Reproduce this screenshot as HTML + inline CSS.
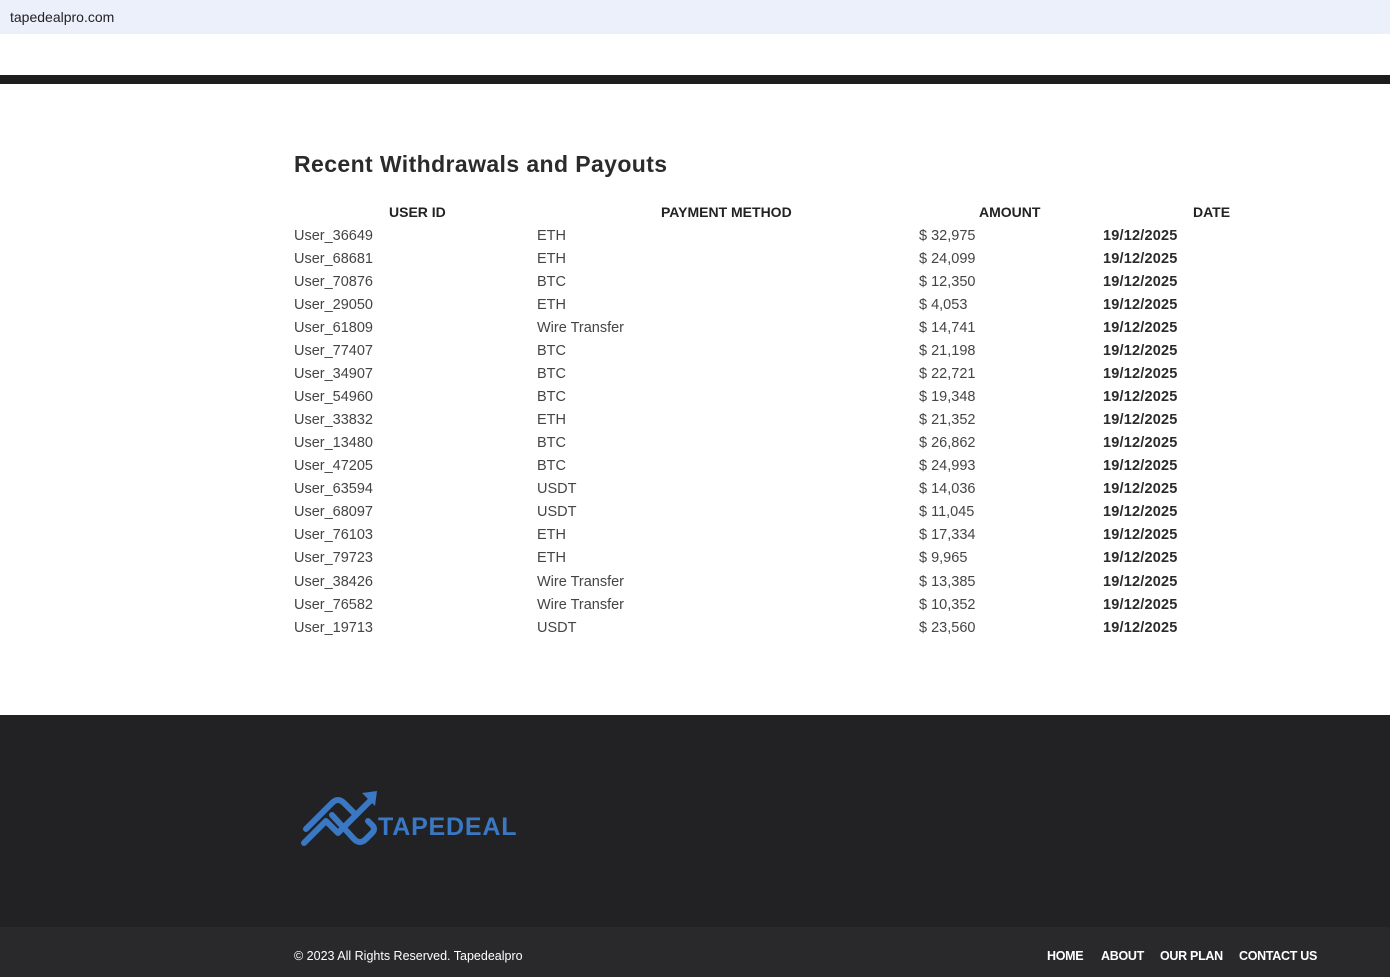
<!DOCTYPE html>
<html><head><meta charset="utf-8"><style>
*{margin:0;padding:0;box-sizing:border-box}
body{width:1390px;height:977px;overflow:hidden;background:#fff;font-family:"Liberation Sans",sans-serif;position:relative;color:#3a3a3a}
.top{position:absolute;left:0;top:0;width:1390px;height:34px;background:#ecf0fa;font-size:14px;color:#222;padding:9px 10px}
.bar{position:absolute;left:0;top:75px;width:1390px;height:9px;background:#1d1d20}
h2{position:absolute;left:294px;top:151px;font-size:23px;font-weight:bold;color:#2b2b2b;letter-spacing:0.4px}
.th{position:absolute;top:204px;font-size:14px;font-weight:bold;color:#222}
.row{position:absolute;left:0;width:1390px;height:23px;font-size:14.5px;color:#444}
.row span{position:absolute;top:0}
.row b{position:absolute;left:1103px;top:0;color:#2a2a2a;font-size:14.5px;letter-spacing:0.2px}
.foot{position:absolute;left:0;top:715px;width:1390px;height:212px;background:#222224}
.bot{position:absolute;left:0;top:927px;width:1390px;height:50px;background:#29292b;color:#fff;font-size:12.5px}
.bot .c{position:absolute;left:294px;top:22px}
.bot .n{position:absolute;top:22px;font-weight:bold;font-size:12.5px;letter-spacing:-0.3px}
</style></head><body>
<div class="top">tapedealpro.com</div>
<div class="bar"></div>
<h2>Recent Withdrawals and Payouts</h2>
<div class="th" style="left:389px">USER ID</div>
<div class="th" style="left:661px">PAYMENT METHOD</div>
<div class="th" style="left:979px">AMOUNT</div>
<div class="th" style="left:1193px">DATE</div>
<div class="row" style="top:228px"><span style="left:294px">User_36649</span><span style="left:537px">ETH</span><span style="left:919px">$ 32,975</span><b>19/12/2025</b></div>
<div class="row" style="top:251px"><span style="left:294px">User_68681</span><span style="left:537px">ETH</span><span style="left:919px">$ 24,099</span><b>19/12/2025</b></div>
<div class="row" style="top:274px"><span style="left:294px">User_70876</span><span style="left:537px">BTC</span><span style="left:919px">$ 12,350</span><b>19/12/2025</b></div>
<div class="row" style="top:297px"><span style="left:294px">User_29050</span><span style="left:537px">ETH</span><span style="left:919px">$ 4,053</span><b>19/12/2025</b></div>
<div class="row" style="top:320px"><span style="left:294px">User_61809</span><span style="left:537px">Wire Transfer</span><span style="left:919px">$ 14,741</span><b>19/12/2025</b></div>
<div class="row" style="top:343px"><span style="left:294px">User_77407</span><span style="left:537px">BTC</span><span style="left:919px">$ 21,198</span><b>19/12/2025</b></div>
<div class="row" style="top:366px"><span style="left:294px">User_34907</span><span style="left:537px">BTC</span><span style="left:919px">$ 22,721</span><b>19/12/2025</b></div>
<div class="row" style="top:389px"><span style="left:294px">User_54960</span><span style="left:537px">BTC</span><span style="left:919px">$ 19,348</span><b>19/12/2025</b></div>
<div class="row" style="top:412px"><span style="left:294px">User_33832</span><span style="left:537px">ETH</span><span style="left:919px">$ 21,352</span><b>19/12/2025</b></div>
<div class="row" style="top:435px"><span style="left:294px">User_13480</span><span style="left:537px">BTC</span><span style="left:919px">$ 26,862</span><b>19/12/2025</b></div>
<div class="row" style="top:458px"><span style="left:294px">User_47205</span><span style="left:537px">BTC</span><span style="left:919px">$ 24,993</span><b>19/12/2025</b></div>
<div class="row" style="top:481px"><span style="left:294px">User_63594</span><span style="left:537px">USDT</span><span style="left:919px">$ 14,036</span><b>19/12/2025</b></div>
<div class="row" style="top:504px"><span style="left:294px">User_68097</span><span style="left:537px">USDT</span><span style="left:919px">$ 11,045</span><b>19/12/2025</b></div>
<div class="row" style="top:527px"><span style="left:294px">User_76103</span><span style="left:537px">ETH</span><span style="left:919px">$ 17,334</span><b>19/12/2025</b></div>
<div class="row" style="top:550px"><span style="left:294px">User_79723</span><span style="left:537px">ETH</span><span style="left:919px">$ 9,965</span><b>19/12/2025</b></div>
<div class="row" style="top:574px"><span style="left:294px">User_38426</span><span style="left:537px">Wire Transfer</span><span style="left:919px">$ 13,385</span><b>19/12/2025</b></div>
<div class="row" style="top:597px"><span style="left:294px">User_76582</span><span style="left:537px">Wire Transfer</span><span style="left:919px">$ 10,352</span><b>19/12/2025</b></div>
<div class="row" style="top:620px"><span style="left:294px">User_19713</span><span style="left:537px">USDT</span><span style="left:919px">$ 23,560</span><b>19/12/2025</b></div>
<div class="foot">
<svg style="position:absolute;left:298px;top:72px" width="230" height="66" viewBox="0 0 230 66">
<g fill="none" stroke="#3a78c4" stroke-width="6" stroke-linejoin="round" stroke-linecap="round">
<path d="M8 42 L34 16 Q40 10 46 16 L58 28"/>
<path d="M6 56 L28 34 L40 46 L56 30 L72 14"/>
<path d="M34 28 L56 52 Q62 58 68 52 L74 46 Q78 42 74 38 L70 34"/>
</g>
<path d="M64 6 L79 4 L77 19 Z" fill="#3a78c4"/>
<text x="80" y="48" font-family="Liberation Sans,sans-serif" font-size="25" font-weight="bold" fill="#3a78c4" letter-spacing="0.8">TAPEDEAL</text>
</svg>
</div>
<div class="bot">
<div class="c">© 2023 All Rights Reserved. Tapedealpro</div>
<div class="n" style="left:1047px">HOME</div>
<div class="n" style="left:1101px">ABOUT</div>
<div class="n" style="left:1160px">OUR PLAN</div>
<div class="n" style="left:1239px">CONTACT US</div>
</div>
</body></html>
